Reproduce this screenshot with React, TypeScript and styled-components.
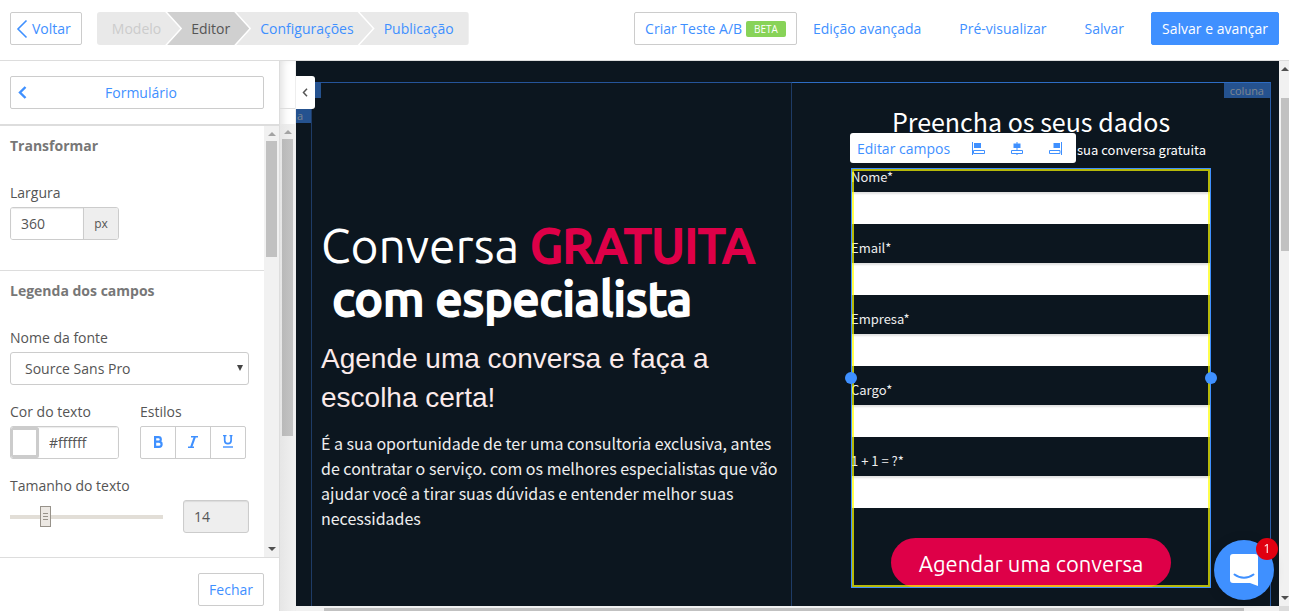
import React, { useState } from "react";
import styled, { createGlobalStyle, css } from "styled-components";

const blue = "#3f90ff";
const border = "#ccc";
const sourceSans = '"Source Sans Pro", "Noto Sans CJK SC", sans-serif';
const ubuntu = 'Ubuntu, "Noto Sans", sans-serif';

const GlobalStyle = createGlobalStyle`
  *, *::before, *::after { box-sizing: border-box; }
  body {
    margin: 0;
    background: #fff;
    color: #555;
    font: 14px/20px "Open Sans", sans-serif;
    overflow: hidden;
  }
  button, input, select { font: inherit; color: inherit; margin: 0; }
  button { cursor: pointer; }
  h1, h2, h3, p { margin: 0; font-weight: 400; }
`;

const Page = styled.div`
  display: flex;
  flex-direction: column;
  height: 100vh;
`;

/* Top bar */

const TopBar = styled.header`
  display: flex;
  justify-content: space-between;
  align-items: flex-start;
  flex: none;
  height: 61px;
  padding: 12px 10px 0;
  border-bottom: 1px solid #ddd;
`;

const Group = styled.div<{ $gap: number }>`
  display: flex;
  gap: ${(p) => p.$gap}px;
`;

const Button = styled.button<{ $kind?: "primary" | "plain" }>`
  display: flex;
  align-items: center;
  justify-content: center;
  gap: 4px;
  height: 33px;
  padding: 0 10px;
  border: 1px solid ${border};
  border-radius: 2px;
  background: #fff;
  color: ${blue};
  white-space: nowrap;
  ${(p) => p.$kind === "primary" && css`background: ${blue}; border-color: ${blue}; color: #fff;`}
  ${(p) => p.$kind === "plain" && css`border-color: transparent;`}
`;

const BackButton = styled(Button)`
  padding: 0 10px 0 5px;
`;

const Badge = styled.span`
  height: 16px;
  padding: 0 8px;
  border-radius: 2px;
  background: #88d358;
  color: #fff;
  font-size: 10px;
  line-height: 16px;
`;

const Steps = styled.nav`
  display: flex;
  border-radius: 3px;
  overflow: hidden;
`;

const Step = styled.a<{ $state?: "done" | "current" }>`
  height: 33px;
  margin-left: -13px;
  padding: 0 19px 0 24px;
  background: ${(p) => (p.$state === "current" ? "#d0d0d0" : "#e9e9e9")};
  color: ${(p) => (p.$state === "current" ? "#555" : p.$state === "done" ? "#ccc" : blue)};
  line-height: 33px;
  text-decoration: none;
  clip-path: polygon(0 0, calc(100% - 15px) 0, 100% 50%, calc(100% - 15px) 100%, 0 100%, 15px 50%);
  &:first-child {
    margin-left: 0;
    padding-left: 15px;
    clip-path: polygon(0 0, calc(100% - 15px) 0, 100% 50%, calc(100% - 15px) 100%, 0 100%);
  }
  &:last-child {
    padding-right: 15px;
    clip-path: polygon(0 0, 100% 0, 100% 100%, 0 100%, 15px 50%);
  }
`;

/* Scroll bars */

const Track = styled.div<{ $size: number }>`
  display: flex;
  flex-direction: column;
  align-items: center;
  flex: none;
  width: ${(p) => p.$size}px;
  background: #f1f1f1;
`;

const Arrow = styled.i<{ $down?: boolean; $color: string }>`
  flex: none;
  width: 0;
  margin: ${(p) => (p.$down ? "auto 0 6px" : "6px 0 5px")};
  border: 4px solid transparent;
  border-width: ${(p) => (p.$down ? "4px 4px 0" : "0 4px 4px")};
  border-${(p) => (p.$down ? "top" : "bottom")}-color: ${(p) => p.$color};
`;

const Thumb = styled.div<{ $length: number }>`
  width: 11px;
  height: ${(p) => p.$length}%;
  background: #c1c1c1;
`;

/* Settings panel */

const Main = styled.div`
  display: flex;
  flex: 1;
  min-height: 0;
`;

const Panel = styled.aside`
  display: flex;
  flex-direction: column;
  flex: none;
  width: 280px;
  border-right: 1px solid #ddd;
`;

const PanelHead = styled.div`
  padding: 15px 15px 15px 10px;
  border-bottom: 2px solid #ddd;
`;

const PanelTitle = styled(Button)`
  width: 100%;
  padding: 0 12px 0 7px;
  span { flex: 1; }
`;

const PanelBody = styled.div`
  display: flex;
  flex: 1;
  min-height: 0;
`;

const PanelScroll = styled.div`
  flex: 1;
  overflow: hidden;
`;

const Section = styled.section`
  display: flex;
  flex-direction: column;
  gap: 17px;
  padding: 10px 15px 30px 10px;
  & + & { border-top: 1px solid #ddd; }
`;

const SectionTitle = styled.h3`
  margin-bottom: 10px;
  color: #777;
  font-size: 14px;
  font-weight: 700;
`;

const Row = styled.div<{ $gap?: number }>`
  display: flex;
  align-items: flex-end;
  gap: ${(p) => p.$gap ?? 0}px;
`;

const Field = styled.div`
  display: flex;
  flex-direction: column;
  gap: 4px;
`;

const Combo = styled.div`
  display: flex;
  width: 109px;
  height: 33px;
  border: 1px solid ${border};
  border-radius: 3px;
  overflow: hidden;
`;

const TextInput = styled.input`
  flex: 1;
  min-width: 0;
  padding: 0 10px;
  border: 0;
  background: #fff;
  box-shadow: inset 0 1px 1px rgba(0, 0, 0, 0.08);
`;

const Unit = styled.span`
  width: 35px;
  border-left: 1px solid ${border};
  background: #eee;
  font-size: 12px;
  line-height: 31px;
  text-align: center;
`;

const Swatch = styled.button`
  width: 28px;
  border: 3px solid ${border};
  border-left-width: 2px;
  border-radius: 2px;
  background: #fff;
  padding: 0;
`;

const SelectBox = styled.div`
  position: relative;
  width: 239px;
  &::after {
    content: "";
    position: absolute;
    right: 6px;
    top: 13px;
    border: 3px solid transparent;
    border-top: 6px solid #444;
    border-bottom: 0;
    pointer-events: none;
  }
`;

const Select = styled.select`
  appearance: none;
  display: block;
  width: 100%;
  height: 33px;
  padding: 0 14px;
  border: 1px solid ${border};
  border-radius: 3px;
  background: #fff;
`;

const StyleButtons = styled.div`
  display: flex;
  border: 1px solid ${border};
  border-radius: 2px;
`;

const StyleButton = styled.button`
  display: flex;
  align-items: center;
  justify-content: center;
  width: 35px;
  height: 31px;
  padding: 0 0 2px;
  border: 0;
  background: none;
  color: ${blue};
  & + & { border-left: 1px solid ${border}; }
  &:first-child { width: 34px; }
`;

const sliderThumb = css`
  width: 11px;
  height: 21px;
  border: 1px solid #97928a;
  border-radius: 0;
  background:
    linear-gradient(#97928a, #97928a) 50% 6px / 5px 1px no-repeat,
    linear-gradient(#97928a, #97928a) 50% 9px / 5px 1px no-repeat,
    linear-gradient(#97928a, #97928a) 50% 12px / 5px 1px no-repeat,
    #ece8e3;
`;

const Slider = styled.input`
  appearance: none;
  width: 153px;
  height: 33px;
  background: linear-gradient(#e2ded7, #e2ded7) 0 50% / 100% 4px no-repeat;
  &::-webkit-slider-thumb { appearance: none; ${sliderThumb} }
  &::-moz-range-thumb { ${sliderThumb} }
`;

const SizeInput = styled.input`
  width: 66px;
  height: 33px;
  padding: 0 10px;
  border: 1px solid ${border};
  border-radius: 3px;
  background: #eee;
  box-shadow: inset 0 1px 1px rgba(0, 0, 0, 0.08);
`;

const PanelFoot = styled.div`
  display: flex;
  justify-content: flex-end;
  flex: none;
  height: 54px;
  padding: 15px 15px 0;
  border-top: 1px solid #ddd;
`;

const Gutter = styled.div`
  display: flex;
  flex-direction: column;
  flex: none;
  width: 16px;
  border-right: 1px solid #eee;
  box-shadow: inset 6px 0 8px -4px rgba(0, 0, 0, 0.14);
`;

const GutterHead = styled.div`
  flex: none;
  height: 63px;
  padding-top: 47px;
  &::after { content: ""; display: block; border-top: 1px solid #ddd; }
`;

const GutterTrack = styled(Track)`
  flex: 1;
  background: linear-gradient(90deg, #e6e6e6, #f1f1f1);
  ${Thumb} { background: linear-gradient(90deg, #b9b9b9, #c4c4c4); }
`;

/* Page canvas */

const Work = styled.main`
  display: flex;
  flex-direction: column;
  flex: 1;
  min-width: 0;
`;

const Viewport = styled.div`
  position: relative;
  flex: 1;
  min-height: 0;
  padding: 21px 8px 0 15px;
  overflow: hidden;
  background: #0c161f;
`;

const Columns = styled.div`
  display: grid;
  grid-template-columns: 1fr 1fr;
  height: 100%;
`;

const Column = styled.div<{ $active?: boolean }>`
  position: relative;
  padding: ${(p) => (p.$active ? "19px 59px 0" : "136px 9px 0")};
  border-top: 1px solid ${(p) => (p.$active ? "#2d6cc4" : "#25549a")};
  border-right: ${(p) => (p.$active ? "1px solid #2a5ea8" : "0")};
  border-left: 1px solid #1e3b66;
`;

const ColumnTag = styled.span`
  position: absolute;
  top: 0;
  right: 0;
  padding: 0 6px;
  background: #25528f;
  color: #7f8790;
  font-size: 11px;
  line-height: 15px;
`;

const SideTag = styled(ColumnTag)`
  top: 47px;
  right: auto;
  left: 0;
  width: 15px;
  padding: 0 1px;
`;

const CornerTag = styled(ColumnTag)`
  top: 22px;
  right: auto;
  left: 0;
  width: 25px;
  height: 15px;
`;

const Collapse = styled.button`
  position: absolute;
  top: 15px;
  left: 0;
  display: flex;
  align-items: center;
  justify-content: center;
  width: 19px;
  height: 33px;
  padding: 0 1px 0 0;
  border: 0;
  border-radius: 0 3px 3px 0;
  background: #fff;
  color: #555;
`;

const Headline = styled.h1`
  color: #fff;
  font: 400 48px/53px ${ubuntu};
  white-space: nowrap;
`;

const Strong = styled.strong<{ $accent?: boolean }>`
  font-weight: 500;
  -webkit-text-stroke: 2px currentColor;
  ${(p) => p.$accent && css`color: #de0048;`}
`;

const Lead = styled.h2`
  margin-top: 14px;
  color: #fbeaea;
  font: 28px/39px "Liberation Sans", Arial, sans-serif;
`;

const Copy = styled.p`
  margin-top: 14px;
  color: #eee;
  font: 16px/25px ${sourceSans};
`;

const FormTitle = styled.h2`
  color: #fff;
  font: 25px/38px ${sourceSans};
  text-align: center;
`;

const FormNote = styled.p`
  padding-right: 5px;
  color: #fff;
  font: 13px/20px ${sourceSans};
  text-align: right;
`;

const Form = styled.form`
  position: relative;
  display: flex;
  flex-direction: column;
  gap: 15px;
  margin-top: 8px;
  padding-bottom: 1px;
`;

const FormField = styled.label`
  display: flex;
  flex-direction: column;
  gap: 6px;
  color: #eee;
  font: 13px/18px ${sourceSans};
  input {
    height: 32px;
    padding: 0 10px;
    border: 0;
    background: #fff;
    box-shadow: inset 0 2px 2px rgba(0, 0, 0, 0.12);
    color: #555;
  }
`;

const Submit = styled.button`
  align-self: center;
  width: 280px;
  height: 49px;
  margin-top: 15px;
  padding: 2px 0 0;
  border: 0;
  border-radius: 25px;
  background: #de0048;
  color: #fff;
  font: 22px/47px ${ubuntu};
`;

const Selection = styled.div`
  position: absolute;
  inset: 0;
  border: 1px solid ${blue};
  pointer-events: none;
  &::before {
    content: "";
    position: absolute;
    inset: 0;
    border: 2px solid rgba(255, 255, 0, 0.7);
  }
`;

const Handle = styled.i<{ $side: "left" | "right" }>`
  position: absolute;
  top: calc(50% - 6px);
  ${(p) => p.$side}: -7px;
  width: 12px;
  height: 12px;
  border-radius: 50%;
  background: ${blue};
`;

const Toolbar = styled.div`
  position: absolute;
  top: -35px;
  left: -1px;
  display: flex;
  align-items: center;
  justify-content: space-between;
  width: 226px;
  height: 30px;
  padding: 1px 14px 0 7px;
  border-radius: 3px;
  background: #fff;
`;

const Tool = styled.button`
  display: flex;
  padding: 0;
  border: 0;
  background: none;
  color: ${blue};
`;

const HorizontalTrack = styled.div`
  flex: none;
  height: 5px;
  padding: 2px 35px 0 28px;
  background: #f1f1f1;
  &::before { content: ""; display: block; height: 3px; background: #c1c1c1; }
`;

const RightTrack = styled(Track)`
  align-items: flex-start;
  padding-left: 2px;
  border-bottom: 5px solid #dcdcdc;
  overflow: hidden;
`;

const PageThumb = styled(Thumb)`
  flex: none;
  margin-top: 22px;
`;

const Chat = styled.button`
  position: fixed;
  right: 15px;
  bottom: 11px;
  display: flex;
  align-items: center;
  justify-content: center;
  width: 60px;
  height: 60px;
  padding: 0;
  border: 0;
  border-radius: 50%;
  background: ${blue};
  box-shadow: 0 1px 12px rgba(0, 0, 0, 0.15);
`;

const ChatCount = styled.span`
  position: absolute;
  top: -2px;
  right: -4px;
  width: 22px;
  height: 22px;
  border-radius: 50%;
  background: #e00010;
  color: #fff;
  font-size: 12px;
  line-height: 21px;
`;

const fields = ["Nome*", "Email*", "Empresa*", "Cargo*", "1 + 1 = ?*"];

export default function App() {
  const [size, setSize] = useState(14);
  return (
    <Page>
      <GlobalStyle />
      <TopBar>
        <Group $gap={15}>
          <BackButton type="button">
            <svg width="12" height="20" viewBox="0 0 12 20" fill="none" stroke="currentColor" strokeWidth="1.6">
              <path d="M10.5 1.5 2 10l8.500 8.500" />
            </svg>
            Voltar
          </BackButton>
          <Steps aria-label="Etapas">
            <Step href="#modelo" $state="done">Modelo</Step>
            <Step href="#editor" $state="current" aria-current="step">Editor</Step>
            <Step href="#configuracoes">Configurações</Step>
            <Step href="#publicacao">Publicação</Step>
          </Steps>
        </Group>
        <Group $gap={16}>
          <Group $gap={5}>
            <Button type="button">Criar Teste A/B <Badge>BETA</Badge></Button>
            <Button type="button" $kind="plain">Edição avançada</Button>
          </Group>
          <Button type="button" $kind="plain">Pré-visualizar</Button>
          <Button type="button" $kind="plain">Salvar</Button>
          <Button type="button" $kind="primary">Salvar e avançar</Button>
        </Group>
      </TopBar>

      <Main>
        <Panel>
          <PanelHead>
            <PanelTitle type="button">
              <svg width="9" height="13" viewBox="0 0 9 13" fill="none" stroke="currentColor" strokeWidth="2.4">
                <path d="M7.500 1 2 6.500 7.500 12" />
              </svg>
              <span>Formulário</span>
            </PanelTitle>
          </PanelHead>
          <PanelBody>
            <PanelScroll>
              <Section>
                <SectionTitle>Transformar</SectionTitle>
                <Field>
                  <label htmlFor="width">Largura</label>
                  <Combo>
                    <TextInput id="width" defaultValue="360" />
                    <Unit>px</Unit>
                  </Combo>
                </Field>
              </Section>
              <Section>
                <SectionTitle>Legenda dos campos</SectionTitle>
                <Field>
                  <label htmlFor="font">Nome da fonte</label>
                  <SelectBox>
                    <Select id="font">
                      <option>Source Sans Pro</option>
                    </Select>
                  </SelectBox>
                </Field>
                <Row $gap={21}>
                  <Field>
                    <label htmlFor="color">Cor do texto</label>
                    <Combo>
                      <Swatch type="button" aria-label="Escolher cor" />
                      <TextInput id="color" defaultValue="#ffffff" />
                    </Combo>
                  </Field>
                  <Field>
                    <span>Estilos</span>
                    <StyleButtons>
                      <StyleButton type="button" aria-label="Negrito">
                        <svg width="10" height="12" viewBox="0 0 10 12" fill="none" stroke="currentColor" strokeWidth="2.200">
                          <path d="M2.100 1.100h3.400a2.200 2.200 0 0 1 0 4.600H2.100M2.100 0v12M2.100 10.900h3.900a2.500 2.500 0 0 0 0-5.200H2" />
                        </svg>
                      </StyleButton>
                      <StyleButton type="button" aria-label="Itálico">
                        <svg width="12" height="12" viewBox="0 0 12 12" fill="none" stroke="currentColor" strokeWidth="1.400">
                          <path d="M4 .8h7M1 11.200h6" />
                          <path d="M7.800 1 4.200 11" strokeWidth="2.200" />
                        </svg>
                      </StyleButton>
                      <StyleButton type="button" aria-label="Sublinhado">
                        <svg width="12" height="13" viewBox="0 0 12 13" fill="none" stroke="currentColor" strokeWidth="1.700">
                          <path d="M2.700 0v5.500a3.200 3.200 0 0 0 6.400 0V0" />
                          <path d="M1 .6h3.500M7.500.6H10.500" strokeWidth="1.200" />
                          <path d="M1 12h10" strokeWidth="1.400" />
                        </svg>
                      </StyleButton>
                    </StyleButtons>
                  </Field>
                </Row>
                <Row $gap={20}>
                  <Field>
                    <label htmlFor="size">Tamanho do texto</label>
                    <Slider id="size" type="range" min={8} max={36} value={size} onChange={(e) => setSize(Number(e.target.value))} />
                  </Field>
                  <SizeInput aria-label="Tamanho do texto em pixels" readOnly value={size} />
                </Row>
              </Section>
            </PanelScroll>
            <Track $size={15}>
              <Arrow $color="#a3a3a3" />
              <Thumb $length={27} />
              <Arrow $down $color="#505050" />
            </Track>
          </PanelBody>
          <PanelFoot>
            <Button type="button">Fechar</Button>
          </PanelFoot>
        </Panel>

        <Gutter>
          <GutterHead />
          <GutterTrack $size={15}>
            <Arrow $color="#a3a3a3" />
            <Thumb $length={61} />
          </GutterTrack>
        </Gutter>

        <Work>
          <Viewport>
            <Columns>
              <Column>
                <Headline>
                  Conversa <Strong $accent>GRATUITA</Strong>
                  <br />
                  <Strong>&nbsp;com especialista</Strong>
                </Headline>
                <Lead>Agende uma conversa e faça a escolha certa!</Lead>
                <Copy>
                  É a sua oportunidade de ter uma consultoria exclusiva, antes de contratar o serviço. com os melhores
                  especialistas que vão ajudar você a tirar suas dúvidas e entender melhor suas necessidades
                </Copy>
              </Column>
              <Column $active>
                <ColumnTag>coluna</ColumnTag>
                <FormTitle>Preencha os seus dados</FormTitle>
                <FormNote>sua conversa gratuita</FormNote>
                <Form onSubmit={(e) => e.preventDefault()}>
                  {fields.map((name) => (
                    <FormField key={name}>
                      {name}
                      <input type="text" />
                    </FormField>
                  ))}
                  <Submit type="submit">Agendar uma conversa</Submit>
                  <Selection>
                    <Handle $side="left" />
                    <Handle $side="right" />
                  </Selection>
                  <Toolbar>
                    <Tool type="button">Editar campos</Tool>
                    <Group $gap={26}>
                      <Tool type="button" aria-label="Alinhar à esquerda">
                        <svg width="13" height="13" viewBox="0 0 13 13" fill="none" stroke="currentColor">
                          <path d="M.5 0v13" />
                          <path d="M2 1h7v5H2z" fill="currentColor" stroke="none" />
                          <path d="M1.500 8.500h11v3h-11z" />
                        </svg>
                      </Tool>
                      <Tool type="button" aria-label="Centralizar">
                        <svg width="12" height="13" viewBox="0 0 12 13" fill="none" stroke="currentColor">
                          <path d="M6 0v8.500M6 11.500V13" />
                          <path d="M2.500 1.500h7V6h-7z" fill="currentColor" stroke="none" />
                          <path d="M.5 8.500h11v3H.5z" />
                        </svg>
                      </Tool>
                      <Tool type="button" aria-label="Alinhar à direita">
                        <svg width="13" height="13" viewBox="0 0 13 13" fill="none" stroke="currentColor">
                          <path d="M12.500 0v13" />
                          <path d="M4.500 1h6.500v5H4.500z" fill="currentColor" stroke="none" />
                          <path d="M.5 8.500h10.500v3H.5z" />
                        </svg>
                      </Tool>
                    </Group>
                  </Toolbar>
                </Form>
              </Column>
            </Columns>
            <SideTag>a</SideTag>
            <CornerTag />
            <Collapse type="button" aria-label="Recolher painel">
              <svg width="6" height="9" viewBox="0 0 6 9" fill="none" stroke="currentColor" strokeWidth="1.500">
                <path d="M5 .8 1.500 4.500 5 8.200" />
              </svg>
            </Collapse>
          </Viewport>
          <HorizontalTrack />
        </Work>
        <RightTrack $size={10}>
          <Arrow $color="#505050" />
          <PageThumb $length={28} />
          <Arrow $down $color="#505050" />
        </RightTrack>
      </Main>

      <Chat type="button" aria-label="Abrir chat">
        <svg width="28" height="32" viewBox="0 0 28 32">
          <path d="M3 0h22a3 3 0 0 1 3 3v29l-8-3H3a3 3 0 0 1-3-3V3a3 3 0 0 1 3-3z" fill="#fff" />
          <path d="M4.500 20.500c5.500 4.200 13.500 4.200 19 0" fill="none" stroke={blue} strokeWidth="2" strokeLinecap="round" />
        </svg>
        <ChatCount>1</ChatCount>
      </Chat>
    </Page>
  );
}
